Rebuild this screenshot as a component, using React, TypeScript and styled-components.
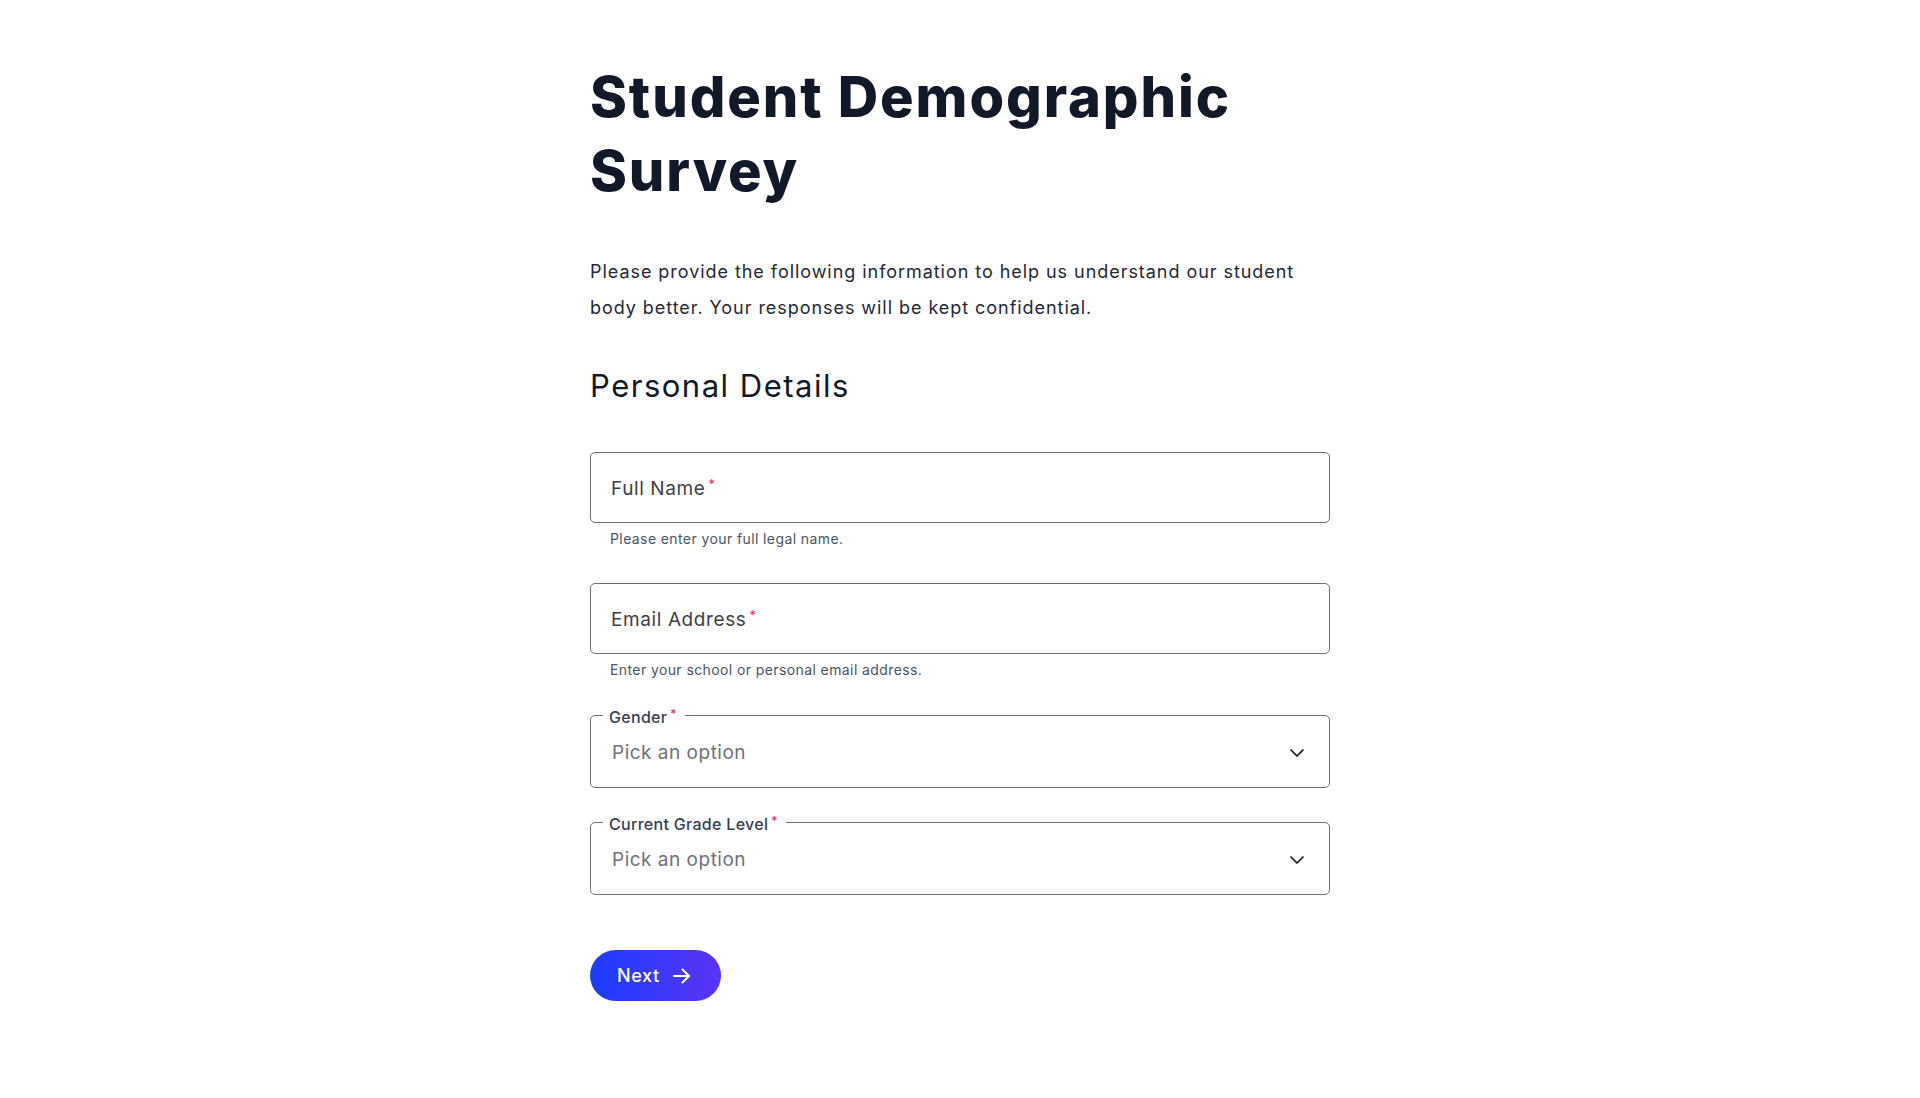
import React from "react";
import styled, { createGlobalStyle } from "styled-components";

const GlobalStyle = createGlobalStyle`
  html, body {
    margin: 0;
    padding: 0;
    background: #ffffff;
  }
  body {
    font-family: Inter, "Liberation Sans", Arial, sans-serif;
    color: #111827;
    -webkit-font-smoothing: antialiased;
  }
  * { box-sizing: border-box; }
`;

const Page = styled.main`
  width: 740px;
  margin: 0 auto;
  padding: 60px 0 80px;
  display: flex;
  flex-direction: column;
`;

const Title = styled.h1`
  margin: 0;
  font-size: 56px;
  line-height: 74px;
  font-weight: 800;
  letter-spacing: 1.9px;
  color: #111827;
`;

const Intro = styled.p`
  margin: 46px 0 0;
  font-size: 18px;
  line-height: 36px;
  font-weight: 400;
  letter-spacing: 0.95px;
  color: #1f2937;
`;

const SectionTitle = styled.h2`
  margin: 42px 0 0;
  font-size: 31px;
  line-height: 36px;
  font-weight: 400;
  letter-spacing: 1.5px;
  color: #111827;
`;

const Form = styled.form`
  margin-top: 48px;
  display: flex;
  flex-direction: column;
`;

const Field = styled.div<{ $gap?: number }>`
  display: flex;
  flex-direction: column;
  margin-top: ${(p) => p.$gap ?? 0}px;
`;

const InputShell = styled.label`
  height: 71px;
  border: 1px solid #71717a;
  border-radius: 5px;
  display: flex;
  align-items: center;
  padding: 0 20px;
  gap: 8px;
  background: #fff;
  cursor: text;
`;

const FloatLabel = styled.span`
  font-size: 19px;
  letter-spacing: 0.6px;
  color: #3f3f46;
  white-space: nowrap;
`;

const Req = styled.span`
  color: #d6336c;
  font-size: 13px;
  margin-left: 3px;
  vertical-align: 6px;
`;

const TextInput = styled.input`
  flex: 1;
  border: none;
  outline: none;
  background: transparent;
  font: inherit;
  font-size: 18px;
  min-width: 0;
`;

const Helper = styled.div`
  margin-top: 6px;
  padding-left: 20px;
  font-size: 14px;
  line-height: 20px;
  letter-spacing: 0.4px;
  color: #4b5563;
`;

const SelectSet = styled.fieldset<{ $gap?: number }>`
  margin: ${(p) => p.$gap ?? 0}px 0 0;
  padding: 0 20px 9px 12px;
  border: 1px solid #71717a;
  border-radius: 5px;
  min-width: 0;
`;

const Legend = styled.legend`
  padding: 0 8px 0 6px;
  font-size: 16px;
  line-height: 20px;
  font-weight: 500;
  letter-spacing: 0.3px;
  color: #374151;
`;

const LegendReq = styled.span`
  color: #d6336c;
  font-size: 12px;
  margin-left: 3px;
  vertical-align: 5px;
`;

const SelectRow = styled.div`
  height: 51px;
  display: flex;
  align-items: center;
  justify-content: space-between;
  padding-left: 9px;
  cursor: pointer;
`;

const Placeholder = styled.span`
  font-size: 19px;
  letter-spacing: 0.5px;
  color: #71717a;
`;

const Chevron = styled.svg`
  width: 24px;
  height: 24px;
  flex: none;
  color: #18181b;
`;

const NextButton = styled.button`
  margin-top: 55px;
  align-self: flex-start;
  height: 51px;
  padding: 0 30px 0 27px;
  border: none;
  border-radius: 999px;
  background: linear-gradient(90deg, #1b3cff 0%, #5b34f5 100%);
  color: #ffffff;
  font-family: inherit;
  font-size: 18px;
  font-weight: 500;
  letter-spacing: 0.6px;
  display: flex;
  align-items: center;
  gap: 12px;
  cursor: pointer;
`;

const Arrow = styled.svg`
  width: 19px;
  height: 16px;
  flex: none;
`;

const ChevronIcon = () => (
  <Chevron viewBox="0 0 24 24" fill="none" stroke="currentColor" strokeWidth={1.7} strokeLinecap="round" strokeLinejoin="round">
    <path d="m6 9 6 6 6-6" />
  </Chevron>
);

type TextFieldProps = { label: string; helper: string; type?: string; gap?: number };

const TextField = ({ label, helper, type = "text", gap }: TextFieldProps) => (
  <Field $gap={gap}>
    <InputShell>
      <FloatLabel>
        {label}
        <Req>*</Req>
      </FloatLabel>
      <TextInput type={type} aria-label={label} />
    </InputShell>
    <Helper>{helper}</Helper>
  </Field>
);

const SelectField = ({ label, gap }: { label: string; gap: number }) => (
  <SelectSet $gap={gap}>
    <Legend>
      {label}
      <LegendReq>*</LegendReq>
    </Legend>
    <SelectRow>
      <Placeholder>Pick an option</Placeholder>
      <ChevronIcon />
    </SelectRow>
  </SelectSet>
);

export default function App() {
  return (
    <>
      <GlobalStyle />
      <Page>
        <Title>
          Student Demographic
          <br />
          Survey
        </Title>
        <Intro>
          Please provide the following information to help us understand our student body better. Your responses will be
          kept confidential.
        </Intro>
        <SectionTitle>Personal Details</SectionTitle>
        <Form onSubmit={(e) => e.preventDefault()}>
          <TextField label="Full Name" helper="Please enter your full legal name." />
          <TextField label="Email Address" type="email" helper="Enter your school or personal email address." gap={34} />
          <SelectField label="Gender" gap={24} />
          <SelectField label="Current Grade Level" gap={23} />
          <NextButton type="submit">
            Next
            <Arrow viewBox="0 0 19 16" fill="none" stroke="currentColor" strokeWidth={2} strokeLinecap="round" strokeLinejoin="round">
              <path d="M2 8h15" />
              <path d="M10.5 1.5 17 8l-6.5 6.5" />
            </Arrow>
          </NextButton>
        </Form>
      </Page>
    </>
  );
}
